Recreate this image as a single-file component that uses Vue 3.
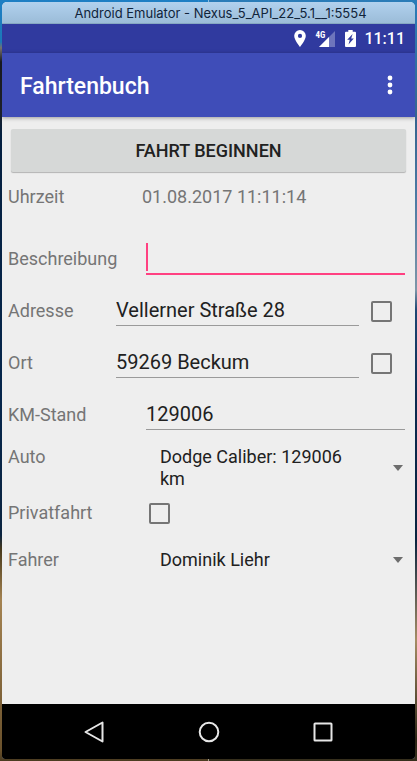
<script setup>
import { ref } from 'vue'

const time = ref('01.08.2017 11:11:14')
const description = ref('')
const address = ref('Vellerner Straße 28')
const saveAddress = ref(false)
const city = ref('59269 Beckum')
const saveCity = ref(false)
const mileage = ref('129006')
const car = ref('Dodge Caliber: 129006 km')
const cars = ['Dodge Caliber: 129006 km']
const isPrivate = ref(false)
const driver = ref('Dominik Liehr')
const drivers = ['Dominik Liehr']
</script>

<template>
  <div class="desktop">
    <div class="window">
      <header class="titlebar">Android Emulator - Nexus_5_API_22_5.1__1:5554</header>

      <div class="statusbar">
        <svg class="pin" width="12" height="17" viewBox="0 0 12 17" aria-hidden="true">
          <path fill="#fff" fill-rule="evenodd" d="M6 0a5.8 5.8 0 0 0-5.8 5.8C.2 10.200 6 17 6 17s5.800-6.800 5.800-11.200A5.800 5.800 0 0 0 6 0zm0 3.800a2.100 2.100 0 1 1 0 4.200 2.100 2.100 0 0 1 0-4.200z" />
        </svg>
        <div class="signal">
          <span class="network">4G</span>
          <svg width="16" height="16" viewBox="0 0 16 16" aria-hidden="true">
            <path fill="#fff" fill-opacity=".3" d="M16 0v16H0z" />
            <path fill="#fff" d="M10 6v10H0z" />
          </svg>
        </div>
        <svg class="battery" width="11" height="17" viewBox="0 0 11 17" aria-hidden="true">
          <path fill="#fff" d="M3.300 0h4.400v1.700H10q1 0 1 1V16q0 1-1 1H1q-1 0-1-1V2.700q0-1 1-1h2.300z" />
          <path fill="#303a9f" d="M7.600 4 2.200 9.800h2.600L3.500 14.500l5.300-6H6.200z" />
        </svg>
        <span class="clock">11:11</span>
      </div>

      <div class="appbar">
        <h1>Fahrtenbuch</h1>
        <button class="overflow" type="button" aria-label="Menü">
          <svg width="6" height="20" viewBox="0 0 6 20" aria-hidden="true">
            <circle cx="3" cy="3" r="2.400" fill="#fff" />
            <circle cx="3" cy="10" r="2.400" fill="#fff" />
            <circle cx="3" cy="17" r="2.400" fill="#fff" />
          </svg>
        </button>
      </div>

      <form class="content" @submit.prevent>
        <button class="start" type="submit">FAHRT BEGINNEN</button>

        <div class="row time">
          <span class="label">Uhrzeit</span>
          <output>{{ time }}</output>
        </div>
        <div class="row edit">
          <label class="label" for="description">Beschreibung</label>
          <div class="field active">
            <span class="caret"></span>
            <input id="description" v-model="description" type="text" />
          </div>
        </div>
        <div class="row edit short">
          <label class="label" for="address">Adresse</label>
          <div class="field"><input id="address" v-model="address" type="text" /></div>
          <input v-model="saveAddress" class="check" type="checkbox" aria-label="Adresse" />
        </div>
        <div class="row edit short">
          <label class="label" for="city">Ort</label>
          <div class="field"><input id="city" v-model="city" type="text" /></div>
          <input v-model="saveCity" class="check" type="checkbox" aria-label="Ort" />
        </div>
        <div class="row edit">
          <label class="label" for="mileage">KM-Stand</label>
          <div class="field"><input id="mileage" v-model="mileage" type="text" inputmode="numeric" /></div>
        </div>
        <div class="row choice">
          <label class="label" for="car">Auto</label>
          <div class="spinner">
            <span class="value" aria-hidden="true">{{ car }}</span>
            <span class="arrow"></span>
            <select id="car" v-model="car">
              <option v-for="c in cars" :key="c">{{ c }}</option>
            </select>
          </div>
        </div>
        <div class="row private">
          <label class="label" for="private">Privatfahrt</label>
          <input id="private" v-model="isPrivate" class="check" type="checkbox" />
        </div>
        <div class="row choice driver">
          <label class="label" for="driver">Fahrer</label>
          <div class="spinner">
            <span class="value" aria-hidden="true">{{ driver }}</span>
            <span class="arrow"></span>
            <select id="driver" v-model="driver">
              <option v-for="d in drivers" :key="d">{{ d }}</option>
            </select>
          </div>
        </div>
      </form>

      <nav class="navbar">
        <button type="button" aria-label="Zurück">
          <svg width="22" height="22" viewBox="0 0 22 22" aria-hidden="true">
            <path d="M18.500 1.500v19L1.500 11z" fill="none" stroke="#e6e6e6" stroke-width="2" stroke-linejoin="round" />
          </svg>
        </button>
        <button type="button" aria-label="Startseite">
          <svg width="22" height="22" viewBox="0 0 22 22" aria-hidden="true">
            <circle cx="11" cy="11" r="9.300" fill="none" stroke="#e6e6e6" stroke-width="2" />
          </svg>
        </button>
        <button type="button" aria-label="Übersicht">
          <svg width="22" height="22" viewBox="0 0 22 22" aria-hidden="true">
            <rect x="2.500" y="2.500" width="17" height="17" rx=".6" fill="none" stroke="#e6e6e6" stroke-width="2" />
          </svg>
        </button>
      </nav>
    </div>
  </div>
</template>

<style>
body {
  margin: 0;
}
</style>

<style scoped>
* {
  box-sizing: border-box;
}

.desktop {
  display: flex;
  min-height: 100vh;
  padding: 2px;
  font-family: Roboto, "Liberation Sans", sans-serif;
  background:
    linear-gradient(#1e7fc4 0, #1c78b8 42px, #77716c 48px, #17191e 62px, #1d2029 110px, #052040 135px, #06264c 400px, #0b2440 535px, #4a3b1c 550px, #a48352 600px, #6b522c 750px, #4a3b20 100%) left / 50% 100% no-repeat,
    linear-gradient(#2a7cb8 0, #35658f 120px, #4c7ba4 200px, #7d96a8 290px, #1d4774 310px, #0a2a50 400px, #08233f 540px, #a58d65 640px, #2b2413 740px, #37301d 100%) right / 50% 100% no-repeat;
}

.window {
  display: flex;
  flex: 1;
  flex-direction: column;
  min-width: 0;
  overflow: hidden;
  border-radius: 5px 5px 3px 3px;
  background: #eeeeee;
}

.titlebar {
  height: 22px;
  padding-left: 24px;
  border-bottom: 1px solid #86a8c2;
  background: linear-gradient(#b1d1ee, #9bbcd8);
  color: #10243a;
  font: 13px/22px Inter, Roboto, sans-serif;
  text-align: center;
  white-space: nowrap;
}

.statusbar {
  display: flex;
  align-items: center;
  justify-content: flex-end;
  height: 29px;
  padding-right: 10px;
  background: #303a9f;
  color: #fff;
}

.signal {
  display: flex;
  position: relative;
  margin: 0 10px 0 13px;
}

.network {
  position: absolute;
  top: -1px;
  left: -4px;
  font: 700 9px/10px "Roboto Condensed", Roboto, sans-serif;
}

.clock {
  margin-left: 8px;
  font-size: 16px;
  font-weight: 500;
  line-height: 29px;
}

.appbar {
  display: flex;
  position: relative;
  align-items: center;
  justify-content: space-between;
  height: 64px;
  padding: 0 11px 0 18px;
  background: #3f4db8;
  box-shadow: 0 1px 4px rgba(0, 0, 0, .35);
  color: #fff;
}

h1 {
  margin: 0;
  padding-top: 4px;
  font-size: 23px;
  font-weight: 500;
  line-height: 28px;
}

button {
  padding: 0;
  border: 0;
  background: none;
  font-family: inherit;
}

.overflow {
  display: grid;
  place-items: center;
  width: 28px;
  height: 40px;
}

.content {
  display: flex;
  flex: 1;
  flex-direction: column;
  padding: 12px 10px 0 6px;
  color: #212121;
  font-size: 18px;
}

.start {
  height: 43px;
  margin: 0 -1px 4px 3px;
  border-radius: 2px;
  background: #d6d8d7;
  box-shadow: 0 1px 1px rgba(0, 0, 0, .25);
  color: #212121;
  font-size: 18px;
  font-weight: 500;
}

.row {
  display: grid;
  grid-template-columns: 138px minmax(0, 1fr);
  align-items: center;
  height: 52px;
}

.edit {
  align-items: end;
  padding-bottom: 11px;
}

.edit .label,
.edit .check {
  margin-bottom: 4px;
}

.short {
  grid-template-columns: 108px minmax(0, 1fr) 21px;
  padding-right: 13px;
}

.short .field {
  margin-right: 12px;
}

.label,
output {
  color: #757575;
  line-height: 22px;
}

.time {
  grid-template-columns: 134px minmax(0, 1fr);
  height: 57px;
  padding-bottom: 15px;
}

.field {
  display: flex;
  align-items: end;
  height: 40px;
  padding-bottom: 1px;
  border-bottom: 1px solid #9a9a9a;
}

.field input {
  width: 100%;
  min-width: 0;
  height: 28px;
  padding: 0;
  border: 0;
  outline: 0;
  background: transparent;
  color: inherit;
  font: 20px/28px Roboto, sans-serif;
}

.active {
  margin-bottom: -1px;
  border-bottom: 2px solid #ff4081;
}

.caret {
  flex: none;
  width: 2px;
  height: 28px;
  margin-bottom: 1px;
  background: #ff4081;
}

.check {
  width: 21px;
  height: 21px;
  margin: 0;
  border: 2px solid #757575;
  border-radius: 2px;
  background: transparent;
  appearance: none;
}

.check:checked {
  background: #ff4081;
  border-color: #ff4081;
}

.choice {
  align-items: start;
  height: auto;
  padding-top: 5px;
}

.spinner {
  display: grid;
  position: relative;
  grid-template-columns: minmax(0, 1fr) 10px;
  align-items: center;
  column-gap: 40px;
  padding: 0 2px 0 14px;
  line-height: 22px;
}

.arrow {
  border: 5px solid transparent;
  border-top: 6px solid #6d6d6d;
  border-bottom: 0;
}

.spinner select {
  position: absolute;
  inset: 0;
  width: 100%;
  opacity: 0;
  font: inherit;
}

.private {
  grid-template-columns: 141px minmax(0, 1fr);
  height: 46px;
}

.driver {
  padding-top: 13px;
}

.navbar {
  display: flex;
  justify-content: center;
  gap: 14px;
  height: 55px;
  background: #000;
}

.navbar button {
  display: grid;
  place-items: center;
  width: 100px;
}
</style>
